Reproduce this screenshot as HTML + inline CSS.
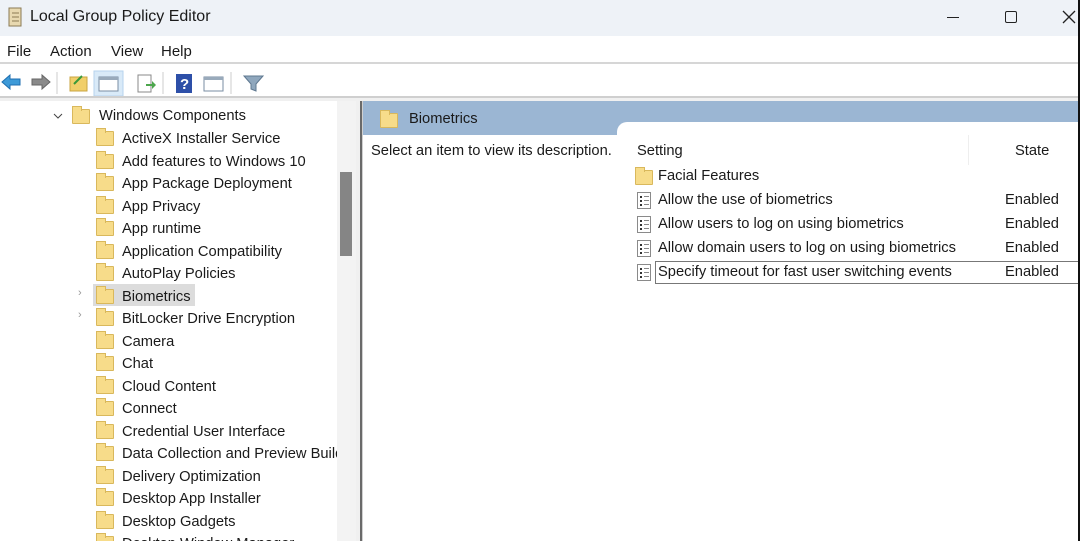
<!DOCTYPE html>
<html><head><meta charset="utf-8"><style>
*{margin:0;padding:0;box-sizing:border-box}
body{width:1080px;height:541px;overflow:hidden;background:#fff;font-family:"Liberation Sans",sans-serif;color:#1a1a1a;position:relative}
.abs{position:absolute}
.title{left:0;top:0;width:1080px;height:36px;background:#eef2f7}
.menu{left:0;top:36px;width:1080px;height:28px;background:#fff;border-bottom:2px solid #d6d6d6;font-size:15px}
.menu span{position:absolute;top:6px}
.tb{left:0;top:66px;width:1080px;height:32px;background:#fff;border-bottom:2px solid #cfcfcf}
.strip{left:0;top:98px;width:1080px;height:3px;background:#f0f0f0}
.tree{left:0;top:101px;width:337px;height:440px;background:#fff;font-size:14.7px}
.row{position:absolute;height:22px;line-height:22px;white-space:nowrap}
.fold{position:absolute;width:18px;height:15px;background:#f7dc8a;border:1px solid #d9b85c;border-radius:1px}
.fold:before{content:"";position:absolute;left:-1px;top:-4px;width:8px;height:4px;background:#f7dc8a;border:1px solid #d9b85c;border-bottom:none}
.doc{position:absolute;width:14px;height:17px;border:1px solid #8a8a8a;background:#fff}
.doc i{position:absolute;left:2px;width:2px;height:2px;background:#333}
.doc b{position:absolute;left:6px;width:5px;height:1px;background:#888}
.t{font-size:14.7px}
</style></head><body>
<div class="abs title">
 <svg class="abs" style="left:6px;top:6px" width="18" height="22"><rect x="3" y="2" width="12" height="18" fill="#e8d9b0" stroke="#8b7a55"/><line x1="6" y1="7" x2="13" y2="7" stroke="#8b7a55"/><line x1="6" y1="11" x2="13" y2="11" stroke="#8b7a55"/><line x1="6" y1="15" x2="13" y2="15" stroke="#8b7a55"/></svg>
 <span class="abs" style="left:30px;top:8px;font-size:16px">Local Group Policy Editor</span>
 <div class="abs" style="left:947px;top:17px;width:12px;height:1px;background:#222"></div>
 <div class="abs" style="left:1005px;top:11px;width:12px;height:12px;border:1.3px solid #222;border-radius:2px"></div>
 <svg class="abs" style="left:1062px;top:10px" width="14" height="14"><path d="M1 1L13 13M13 1L1 13" stroke="#222" stroke-width="1.3"/></svg>
</div>
<div class="abs menu"><span style="left:7px;top:7px">File</span><span style="left:50px;top:7px">Action</span><span style="left:111px;top:7px">View</span><span style="left:161px;top:7px">Help</span></div>
<div class="abs tb">
 <svg class="abs" style="left:0;top:4px" width="270" height="26">
  <path d="M2 12L10 5V9H20V15H10V19Z" fill="#3d9ad8" stroke="#1f6fb0"/>
  <path d="M50 12L42 5V9H32V15H42V19Z" fill="#8a8a8a" stroke="#666"/>
  <line x1="57" y1="2" x2="57" y2="24" stroke="#ccc"/>
  <rect x="70" y="7" width="17" height="14" fill="#f1cf6a" stroke="#c9a441"/><path d="M74 14L82 6" stroke="#3a9a3a" stroke-width="2"/>
  <rect x="94" y="1" width="29" height="25" fill="#d9eaf8" stroke="#b6d3ee"/>
  <rect x="99" y="7" width="19" height="14" fill="#fff" stroke="#7a8da3"/><rect x="99" y="7" width="19" height="3" fill="#9ab"/>
  <rect x="138" y="5" width="13" height="17" fill="#fff" stroke="#888"/><path d="M146 14h6v-3l4 4-4 4v-3h-6z" fill="#4ca64c"/>
  <line x1="163" y1="2" x2="163" y2="24" stroke="#ccc"/>
  <rect x="176" y="4" width="16" height="19" fill="#2d4fa8"/><text x="180" y="19" fill="#fff" font-size="15" font-weight="bold" font-family="Liberation Sans">?</text>
  <rect x="204" y="7" width="19" height="14" fill="#fff" stroke="#7a8da3"/><rect x="204" y="7" width="19" height="3" fill="#9ab"/>
  <line x1="231" y1="2" x2="231" y2="24" stroke="#ccc"/>
  <path d="M244 6H263L256 14V21L251 19V14Z" fill="#8fa7bd" stroke="#5f7890"/>
 </svg>
</div>
<div class="abs strip"></div>

<div class="abs tree">
 <svg class="abs" style="left:53px;top:11px" width="10" height="8"><path d="M1 2L5 6L9 2" stroke="#444" fill="none"/></svg>
 <div class="fold" style="left:72px;top:8px"></div>
 <div class="row" style="left:99px;top:4px">Windows Components</div>
</div>
<div class="abs" id="items" style="left:0;top:101px;width:337px;height:440px;font-size:14.7px;overflow:hidden">
</div>
<div class="abs" style="left:337px;top:101px;width:19px;height:440px;background:#f3f3f3"></div>
<div class="abs" style="left:340px;top:172px;width:12px;height:84px;background:#858585"></div>
<div class="abs" style="left:356px;top:101px;width:4px;height:440px;background:#f0f0f0"></div>
<div class="abs" style="left:360px;top:101px;width:2px;height:440px;background:#6a6a6a"></div>
<div class="abs" style="left:362px;top:101px;width:1px;height:440px;background:#d0d0d0"></div>

<div class="abs" style="left:363px;top:101px;width:717px;height:34px;background:#9bb6d3"></div>
<div class="abs" style="left:617px;top:122px;width:470px;height:30px;background:#fff;border-radius:10px 0 0 0"></div>
<div class="fold" style="left:380px;top:113px"></div>
<span class="abs t" style="left:409px;top:111px">Biometrics</span>
<span class="abs t" style="left:371px;top:143px">Select an item to view its description.</span>
<span class="abs t" style="left:637px;top:143px">Setting</span>
<div class="abs" style="left:968px;top:135px;width:1px;height:30px;background:#eee"></div>
<span class="abs t" style="left:1015px;top:143px">State</span>
<div class="fold" style="left:635px;top:170px"></div>
<span class="abs t" style="left:658px;top:168px">Facial Features</span>
<div id="pol"></div>
<div class="abs" style="left:655px;top:261px;width:425px;height:23px;border:1px solid #777;border-right:none"></div>
<div class="abs" style="left:1078px;top:0;width:2px;height:541px;background:#111"></div>
<script>
var names=["ActiveX Installer Service","Add features to Windows 10","App Package Deployment","App Privacy","App runtime","Application Compatibility","AutoPlay Policies","Biometrics","BitLocker Drive Encryption","Camera","Chat","Cloud Content","Connect","Credential User Interface","Data Collection and Preview Builds","Delivery Optimization","Desktop App Installer","Desktop Gadgets","Desktop Window Manager"];
var h="";
names.forEach(function(n,i){var t=27+i*22.5;
 if(i==7)h+='<div class="abs" style="left:93px;top:'+(t-2)+'px;width:102px;height:22px;background:#dcdcdc"></div>';
 if(i==7||i==8)h+='<span class="abs" style="left:78px;top:'+(t+1)+'px;font-size:11px;color:#999">&#8250;</span>';
 h+='<div class="fold" style="left:96px;top:'+(t+3)+'px"></div><div class="row" style="left:122px;top:'+t+'px">'+n+'</div>';});
document.getElementById('items').innerHTML=h;
var p=["Allow the use of biometrics","Allow users to log on using biometrics","Allow domain users to log on using biometrics","Specify timeout for fast user switching events"];
var g="";
p.forEach(function(n,i){var t=192+i*24;
 g+='<div class="doc" style="left:637px;top:'+(t)+'px"><i style="top:3px"></i><i style="top:7px"></i><i style="top:11px"></i><b style="top:3px"></b><b style="top:7px"></b><b style="top:11px"></b></div>';
 g+='<span class="abs t" style="left:658px;top:'+t+'px">'+n+'</span><span class="abs t" style="left:1005px;top:'+t+'px">Enabled</span>';});
document.getElementById('pol').innerHTML=g;
</script>
</body></html>
